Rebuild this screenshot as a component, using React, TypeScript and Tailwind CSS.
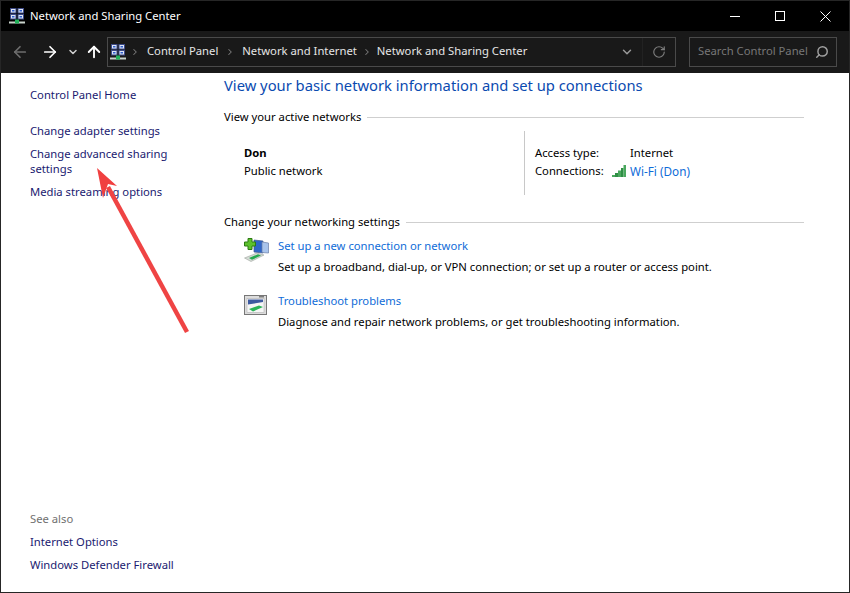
import { ArrowLeft, ArrowRight, ArrowUp, ChevronDown, ChevronRight, RotateCw, Search } from "lucide-react";

const font = { fontFamily: '"Noto Sans", sans-serif' };

function NetworkIcon({ className }: { className?: string }) {
  return (
    <svg viewBox="0 0 16 16" className={className}>
      <rect x="1.5" y="0.5" width="5.5" height="4.5" fill="#dfe6f5" stroke="#3d4a86" />
      <rect x="9" y="0.5" width="5.5" height="4.5" fill="#dfe6f5" stroke="#3d4a86" />
      <rect x="1.5" y="6.5" width="5.5" height="4.5" fill="#dfe6f5" stroke="#3d4a86" />
      <rect x="9" y="6.5" width="5.5" height="4.5" fill="#dfe6f5" stroke="#3d4a86" />
      <rect x="3" y="2" width="2.5" height="1.5" fill="#2f5fd0" />
      <rect x="10.5" y="2" width="2.5" height="1.5" fill="#2f5fd0" />
      <rect x="3" y="8" width="2.5" height="1.5" fill="#2f5fd0" />
      <rect x="10.5" y="8" width="2.5" height="1.5" fill="#2f5fd0" />
      <rect x="0" y="13.5" width="16" height="2" fill="#c9d3cc" />
      <rect x="6" y="11.5" width="4" height="4" fill="#22b35a" />
    </svg>
  );
}

function NewConnectionIcon() {
  return (
    <svg viewBox="0 0 25 24" className="w-[25px] h-[24px] shrink-0 mt-[3px] ml-[1px]">
      <path d="M10 2 L19 3 V15 L10 14 Z" fill="#2f66c8" stroke="#44598a" strokeWidth="0.7" />
      <path d="M18 4 L24.5 5 V15 L18 14.5 Z" fill="#a9c4ec" stroke="#6a7ea8" strokeWidth="0.7" />
      <path d="M0.5 20 L13 15 L20 17 L7 23.5 Z" fill="#d6dbd6" stroke="#8c948c" strokeWidth="0.5" />
      <path d="M5 20 L14 16.3 L17 17.6 L8 21.8 Z" fill="#26a84f" />
      <path d="M4 0.5 H8 V4 H11.5 V8 H8 V11.5 H4 V8 H0.5 V4 H4 Z" fill="#5cc02c" stroke="#2c7a12" />
    </svg>
  );
}

function TroubleshootIcon() {
  return (
    <svg viewBox="0 0 23 20" className="w-[23px] h-[20px] shrink-0 mt-[5px] ml-[1px]">
      <rect x="0.5" y="0.5" width="22" height="19" fill="#dcdcdc" stroke="#777777" />
      <rect x="3" y="3.5" width="17" height="14" fill="#f6f6f6" stroke="#a8a8a8" strokeWidth="0.5" />
      <path d="M4 4.5 H19 V7 L4 9.5 Z" fill="#3c5aa0" />
      <path d="M5 14 L15 10.5 L19 12 L9 16.5 Z" fill="#2bb457" />
      <rect x="15" y="1" width="5" height="1.5" fill="#7d7d7d" />
    </svg>
  );
}

function SignalIcon() {
  return (
    <svg viewBox="0 0 16 12" className="w-[16px] h-[12px] shrink-0 mr-[3px]">
      <rect x="1" y="10" width="3" height="2" fill="#4aa85e" />
      <rect x="4" y="8" width="3" height="4" fill="#2f8f45" />
      <rect x="7" y="5.5" width="3" height="6.5" fill="#4aa85e" />
      <rect x="10" y="3" width="2.5" height="9" fill="#2f8f45" />
      <rect x="12.5" y="0" width="2.5" height="12" fill="#4aa85e" />
    </svg>
  );
}

function SideLink({ children }: { children: React.ReactNode }) {
  return <div className="text-[#1a1a70] text-[11.25px] leading-[15px]">{children}</div>;
}

function SectionTitle({ children }: { children: React.ReactNode }) {
  return (
    <div className="flex items-center gap-[6px] text-[11.25px] leading-[15px] text-black">
      <span>{children}</span>
      <div className="flex-1 h-px mt-[2px] bg-[#cfcfcf]" />
    </div>
  );
}

function Task({ icon, title, desc }: { icon: React.ReactNode; title: string; desc: string }) {
  return (
    <div className="flex items-start ml-[19px]">
      <div className="w-[35px]">{icon}</div>
      <div className="text-[11.25px] leading-[21px]">
        <div className="text-[#0f6cd8]">{title}</div>
        <div className="text-black">{desc}</div>
      </div>
    </div>
  );
}

export default function App() {
  return (
    <div className="relative w-[850px] h-[593px] flex flex-col overflow-hidden bg-white border border-[#262626]" style={font}>
      {/* title bar */}
      <div className="h-[30px] bg-black flex items-center text-white text-[11.25px] shrink-0 pl-[8px]">
        <NetworkIcon className="w-[16px] h-[16px] mr-[5px]" />
        <span>Network and Sharing Center</span>
        <div className="ml-auto flex items-center gap-[35px] pr-[18px]">
          <div className="w-[10px] h-px bg-white" />
          <div className="w-[10px] h-[10px] border border-white" />
          <svg viewBox="0 0 11 11" className="w-[11px] h-[11px]" stroke="white" fill="none"><path d="M0.5 0.5 L10.5 10.5 M10.5 0.5 L0.5 10.5" /></svg>
        </div>
      </div>

      {/* address bar */}
      <div className="h-[42px] bg-[#191919] flex items-center shrink-0 pl-[10px] pr-[12px]">
        <ArrowLeft className="w-[18px] h-[18px] text-[#6e6e6e] mr-[12px]" strokeWidth={2.25} />
        <ArrowRight className="w-[18px] h-[18px] text-white mr-[8px]" strokeWidth={2.25} />
        <ChevronDown className="w-[12px] h-[12px] text-[#d0d0d0] mr-[6px]" strokeWidth={3} />
        <ArrowUp className="w-[18px] h-[18px] text-white mr-[4px]" strokeWidth={2.5} />
        <div className="w-[569px] h-[30px] -mt-[1px] border border-[#4a4a4a] flex items-center text-[11.25px] text-[#e6e6e6]">
          <NetworkIcon className="w-[16px] h-[16px] ml-[2px] mr-[4px]" />
          <ChevronRight className="w-[10px] h-[10px] text-[#7a7a7a] mr-[7px]" strokeWidth={2.5} />
          <span>Control Panel</span>
          <ChevronRight className="w-[10px] h-[10px] text-[#7a7a7a] mx-[7px]" strokeWidth={2.5} />
          <span>Network and Internet</span>
          <ChevronRight className="w-[10px] h-[10px] text-[#7a7a7a] mx-[5px]" strokeWidth={2.5} />
          <span>Network and Sharing Center</span>
          <ChevronDown className="w-[14px] h-[14px] text-[#9a9a9a] ml-auto mr-[8px]" strokeWidth={2.5} />
          <div className="h-full w-px bg-[#222222]" />
          <RotateCw className="w-[14px] h-[14px] text-[#7d7d7d] mx-[9px]" strokeWidth={2} />
        </div>
        <div className="ml-[13px] w-[148px] h-[30px] -mt-[1px] border border-[#4a4a4a] flex items-center justify-between pl-[8px] pr-[7px] text-[11.25px] text-[#777777]">
          <span>Search Control Panel</span>
          <Search className="w-[14px] h-[14px] text-[#a0a0a0] -scale-x-100" strokeWidth={2.5} />
        </div>
      </div>

      {/* body */}
      <div className="flex-1 flex min-h-0">
        <div className="w-[223px] shrink-0 pl-[29px] pt-[14px] pb-[20px] pr-[40px] flex flex-col">
          <SideLink>Control Panel Home</SideLink>
          <div className="mt-[21px]"><SideLink>Change adapter settings</SideLink></div>
          <div className="mt-[8px]"><SideLink>Change advanced sharing settings</SideLink></div>
          <div className="mt-[8px]"><SideLink>Media streaming options</SideLink></div>
          <div className="mt-auto text-[11.25px] leading-[15px] text-[#707070]">See also</div>
          <div className="mt-[8px]"><SideLink>Internet Options</SideLink></div>
          <div className="mt-[8px]"><SideLink>Windows Defender Firewall</SideLink></div>
        </div>

        <div className="flex-1 pt-[2px] pr-[45px]">
          <div className="text-[#0a4ab0] text-[14.75px] leading-[21px]">View your basic network information and set up connections</div>
          <div className="mt-[13px]"><SectionTitle>View your active networks</SectionTitle></div>

          <div className="flex mt-[7px] h-[64px]">
            <div className="w-[300px] pl-[20px] pt-[13px] text-[11.25px] leading-[18px] text-black">
              <div className="font-bold">Don</div>
              <div>Public network</div>
            </div>
            <div className="border-l border-[#c8c8c8] pl-[10px] pt-[13px] text-[11.25px] leading-[18px] text-black">
              <div className="flex"><span className="w-[76px]">Access type:</span>
                <span className="ml-[19px]">Internet</span></div>
              <div className="flex items-center"><span className="w-[76px]">Connections:</span>
                <SignalIcon />
                <span className="text-[#0f6cd8] text-[11.75px]">Wi-Fi (Don)</span></div>
            </div>
          </div>

          <div className="mt-[19px]"><SectionTitle>Change your networking settings</SectionTitle></div>
          <div className="mt-[6px]">
            <Task icon={<NewConnectionIcon />} title="Set up a new connection or network" desc="Set up a broadband, dial-up, or VPN connection; or set up a router or access point." />
          </div>
          <div className="mt-[13px]">
            <Task icon={<TroubleshootIcon />} title="Troubleshoot problems" desc="Diagnose and repair network problems, or get troubleshooting information." />
          </div>
        </div>
      </div>

      {/* annotation arrow */}
      <svg className="absolute -left-px -top-px pointer-events-none" width="850" height="593" viewBox="0 0 850 593">
        <path d="M187 332 L108 187" stroke="#ef4444" strokeWidth="4.5" />
        <path d="M97 168 L117 186 L108 184 L103 198 Z" fill="#f04040" />
      </svg>
    </div>
  );
}
